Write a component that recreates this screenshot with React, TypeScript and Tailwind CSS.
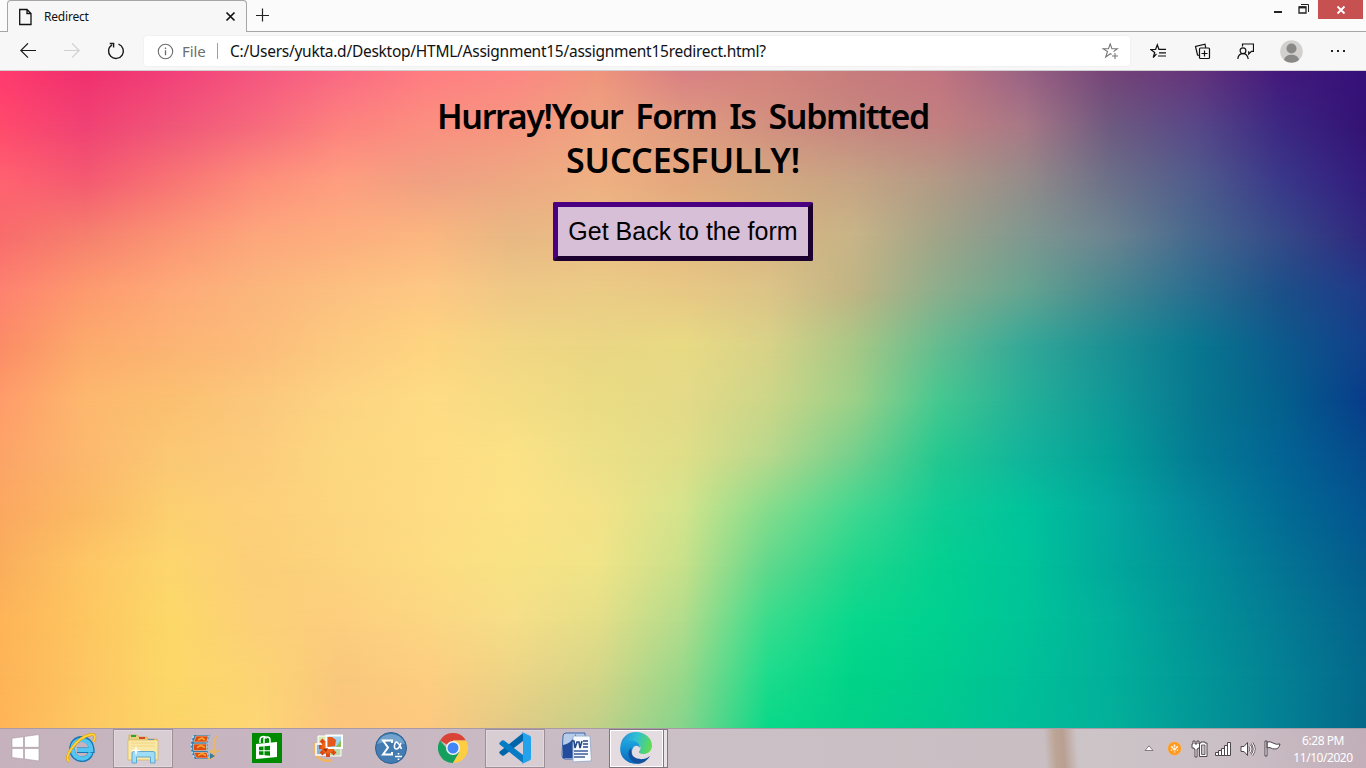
import React from "react";

const COLORS: string[] = [
  "ff3a6e f0306e f2407a f5567f fa6a84 ff7d82 fd8784 f0957c d98084 d4847c c87c7c c27480 9a6284 744478 64347c 43197c 35107a",
  "ff4a6c f04274 f05678 f66a7c fd827e fb8f80 f5967f eea482 e09c80 d29080 c68880 c28080 a87886 6e5a80 584888 3c2882 341274",
  "ff6270 f45a70 f87474 fd8e7a fe9e80 f0a082 eea882 efb082 e4a87e d4a880 c6a484 b29a86 948c8a 6c7088 505c8c 3a388a 331c7e",
  "f86c6c f6806e fb9474 fda67c fdae7e fbb680 e8b884 eabc84 e4b880 d8b480 c8b488 a0a488 809890 6c8490 46688e 364a88 30287e",
  "fe8270 fd9a6e feaa78 fbb67c fcc080 fec884 efc886 ebcc86 e8c884 dcc488 c0b484 8cae8c 66a490 468890 2a6e90 1c5088 203a8a",
  "fb8c66 fcaa6c fcb474 fcbc7a fcca80 fed480 f2d684 ead684 e8da84 d8d288 a8c886 64bc90 34a898 1c9094 087890 0c5a8c 12408a",
  "ff9c6a fdb86e fbc070 fbc87c fdd482 fedc84 f5dc84 eadc84 e4da88 ccd688 9cd088 44c890 24b098 109898 087890 04608c 083c8a",
  "fca468 fcb86e fbc874 fccc7c fcd880 fedc84 fce286 ece088 e0de88 b8d88c 74d08c 24c890 12b49c 04a098 047c94 036494 064a8c",
  "fba860 fbba64 fccf70 fdd07a fdd680 fedc84 fde286 f4e288 d4e48c 84dc8c 40d890 10cc94 00c49c 04a8a0 04889c 026c94 045490",
  "f9ae5c fec664 fdd66e fbce78 fcd47e fddc82 f8e284 f0e488 c8e08a 60d88c 20d68c 04d090 00c49a 02a89c 02909a 047494 045c8c",
  "feb458 fdc660 fcd868 fcd078 fdce7e fcd682 f6de88 e4de88 b2dc8c 38dc8c 08d88c 00d090 00c498 02b09c 029498 047c94 04648c",
  "fdb458 fdc662 fcd868 fcd474 f9c87c fdce80 ecd486 d4d688 98d88a 1cdc8c 00d488 00cc8e 00c098 02b09a 029898 048094 04688c",
  "ffb458 fdc862 fcd468 fdd676 fdc47c fdc880 e0ca86 c0cf88 84d48c 08d888 02d088 02c890 00be98 04b09a 049898 048094 046888",
];

const STEP = 55;
const LAST = COLORS.length - 1;

function Backdrop() {
  return (
    <svg className="absolute top-0 left-0" width="1366" height="660" viewBox="0 0 1366 660" aria-hidden="true">
      <defs>
        {COLORS.map((row, i) => {
          const top = (i - 1) * STEP;
          return (
            <React.Fragment key={i}>
              <linearGradient id={`row${i}`} gradientUnits="userSpaceOnUse" x1="0" y1="0" x2="1366" y2="0">
                {row.split(" ").map((c, j) => (
                  <stop key={j} offset={j / 16} stopColor={`#${c}`} />
                ))}
              </linearGradient>
              {i > 0 && (
                <>
                  <linearGradient id={`fade${i}`} gradientUnits="userSpaceOnUse" x1="0" y1={top} x2="0" y2={top + STEP}>
                    <stop offset="0" stopColor="#fff" stopOpacity="0" />
                    <stop offset="1" stopColor="#fff" stopOpacity="1" />
                  </linearGradient>
                  <mask id={`mask${i}`} maskUnits="userSpaceOnUse" x="0" y={top} width="1366" height={700 - top} style={{ maskType: "alpha" }}>
                    <rect x="0" y={top} width="1366" height={700 - top} fill={`url(#fade${i})`} />
                  </mask>
                </>
              )}
            </React.Fragment>
          );
        })}
      </defs>
      <rect width="1366" height="660" fill="url(#row0)" />
      {COLORS.map((_, i) =>
        i > 0 && i <= LAST ? (
          <rect key={i} x="0" y={(i - 1) * STEP} width="1366" height={700 - (i - 1) * STEP} fill={`url(#row${i})`} mask={`url(#mask${i})`} />
        ) : null
      )}
    </svg>
  );
}

function TitleBar() {
  return (
    <div className="flex h-8 bg-[#fbfbfb]">
      <div className="-mr-px h-8 w-2 shrink-0 border-b border-[#a5a5a5]" />
      <div className="w-60 shrink-0 bg-[#f7f7f7]">
        <div className="flex h-8 items-center rounded-t-[4px] border border-b-0 border-[#a5a5a5]">
          <svg className="ml-[10px]" width="16" height="18" viewBox="0 0 16 18" fill="none" stroke="#111" strokeWidth="1.3">
            <path d="M1.7 1.500h7.300l4 4v11H1.700z M9 1.500v4h4" />
          </svg>
          <span className="ml-[10px] text-[12px] tracking-[-0.2px] text-[#111]">Redirect</span>
          <svg className="mr-[10px] ml-auto" width="11" height="11" viewBox="0 0 11 11" stroke="#111" strokeWidth="1.7">
            <path d="M1.5 1.5l8 8M9.5 1.5l-8 8" />
          </svg>
        </div>
      </div>
      <div className="-ml-px flex flex-1 items-start border-b border-[#a5a5a5]">
        <svg className="mt-[8px] ml-[9px]" width="14" height="14" viewBox="0 0 14 14" stroke="#222" strokeWidth="1.2">
          <path d="M7.500 .5v13M1 7.500h13" />
        </svg>
        <svg className="mt-[3px] ml-auto" width="44" height="12" viewBox="0 0 44 12" fill="none" stroke="#222">
          <path d="M4 9h8" strokeWidth="2" />
          <path d="M29 4h7v6h-7z" strokeWidth="1.3" />
          <path d="M29 4.4h7" strokeWidth="2" />
          <path d="M31 1.5h7.5v7.5" />
        </svg>
        <div className="mr-[3px] ml-[4px] flex h-[19px] w-[45px] items-center justify-center bg-[#c75050]">
          <svg width="10" height="10" viewBox="0 0 10 10" stroke="#fff" strokeWidth="1.8">
            <path d="M1.5 1.5l7 7M8.5 1.5l-7 7" />
          </svg>
        </div>
      </div>
    </div>
  );
}

function Toolbar() {
  return (
    <div className="flex h-[39px] items-center border-b border-[#cfcfcf] bg-[#f7f7f7]">
      <svg className="ml-5" width="16" height="16" viewBox="0 0 16 16" fill="none" stroke="#1a1a1a" strokeWidth="1.2">
        <path d="M16 7.500H.8M8 .3L.8 7.500 8 14.700" />
      </svg>
      <svg className="ml-7" width="16" height="16" viewBox="0 0 16 16" fill="none" stroke="#d0d0d0" strokeWidth="1.2">
        <path d="M0 7.500h15.2M8 .3L15.2 7.500 8 14.700" />
      </svg>
      <svg className="ml-[27px]" width="18" height="18" viewBox="0 0 18 18" fill="none" stroke="#1a1a1a" strokeWidth="1.4">
        <path d="M11.5 2.1A7.4 7.4 0 1 1 5 2.8M2.7 1.5h3.9v3.9" />
      </svg>
      <div className="ml-[19px] flex h-[30px] w-[986px] shrink-0 items-center rounded-[3px] bg-white shadow-[0_0_2px_#e4e4e4]">
        <svg className="ml-[13px]" width="17" height="17" viewBox="0 0 17 17" fill="none" stroke="#6b6b6b" strokeWidth="1.1">
          <circle cx="8.5" cy="8.5" r="7.2" />
          <path d="M8.5 7.3v5M8.5 4.5v1.4" strokeWidth="1.3" />
        </svg>
        <span className="ml-2 w-[25px] text-[15px] tracking-[-0.1px] whitespace-nowrap text-[#6e6e6e]">File</span>
        <span className="mx-[10px] h-4 w-px bg-[#a0a0a0]" />
        <span className="ml-[2px] pt-px text-[15.5px] tracking-[-0.26px] whitespace-nowrap text-[#111]">C:/Users/yukta.d/Desktop/HTML/Assignment15/assignment15redirect.html?</span>
        <svg className="mr-[11px] ml-auto" width="17" height="17" viewBox="0 0 17 17" fill="none" stroke="#777" strokeWidth="1.1">
          <path d="M9.5 11.5l-1.2-.8-4.6 3.3 1.8-5.5L1 5.8h5.500L8.2.9l1.7 4.900h5.400L11.5 8.600M10 13h6M13 10v6" />
        </svg>
      </div>
      <svg className="ml-5" width="17" height="17" viewBox="0 0 17 17" fill="none" stroke="#111" strokeWidth="1.2">
        <path d="M6.5 10.8L3.2 14.5 4.7 9.4.8 6.5h4.8L7.3 1.8l1.6 4.5H16M9 9.8h7M8 13h8" />
      </svg>
      <svg className="ml-[27px]" width="17" height="17" viewBox="0 0 17 17" fill="none" stroke="#111" strokeWidth="1.2">
        <rect x="5.5" y="5" width="10" height="10.5" rx="1" />
        <path d="M10.5 7.5v6M7.5 10.5h6M5.5 12.5l-2-.5L1.5 3.5l9.5-2.3.7 3.6" />
      </svg>
      <svg className="ml-[26px]" width="17" height="17" viewBox="0 0 17 17" fill="none" stroke="#111" strokeWidth="1.2">
        <path d="M5.5 3.5V1h11v7.3h-2l-2.8 2.7V8.3" />
        <circle cx="6" cy="7.8" r="2.9" />
        <path d="M.8 16c.3-3.2 2.2-5.3 5.2-5.3s4.7 2 5.2 5.3" />
      </svg>
      <svg className="ml-[26px]" width="23" height="23" viewBox="0 0 23 23">
        <circle cx="11.5" cy="11.5" r="11.3" fill="#d2d0ce" />
        <circle cx="11.5" cy="8.5" r="5" fill="#8a8886" />
        <path d="M4 20c1-7 14-7 15 0a11.3 11.3 0 0 1-15 0" fill="#8a8886" />
      </svg>
      <svg className="ml-[27px]" width="16" height="4" viewBox="0 0 16 4" fill="#222">
        <path d="M1 1h2v2H1zM7 1h2v2H7zM13 1h2v2h-2z" />
      </svg>
    </div>
  );
}

function WindowsIcon() {
  return (
    <svg width="29" height="28" viewBox="0 0 29 28" fill="#fff" stroke="#a99aa3" strokeWidth=".6">
      <path d="M1 4.3l11.5-1.6v10.6H1zM13.5 2.5L28 .5v12.8H13.5zM1 14.5h11.5V25L1 23.4zM13.5 14.5H28V27l-14.5-2z" />
    </svg>
  );
}

function ExplorerEIcon() {
  return (
    <svg width="32" height="32" viewBox="0 0 32 32" fill="none">
      <path d="M25.8 20.5C23.5 30 8 30 7 17.5 6.500 4 26 2.500 26.800 18.200H12" stroke="#1677b4" strokeWidth="5.600" />
      <path d="M25.500 20.500C23 29 8.500 29 7.500 17.500 7.300 5 25.500 4 26.200 18H12" stroke="#52c5f2" strokeWidth="4.200" />
      <path d="M4.500 29.500C-3 26 12 5 26 2.500c5-.7 4.500 3 2.500 7" stroke="#d99800" strokeWidth="2.800" />
      <path d="M4.500 29.500C-3 26 12 5 26 2.500c5-.7 4.500 3 2.500 7" stroke="#ffd23c" strokeWidth="1.800" />
    </svg>
  );
}

function FolderIcon() {
  return (
    <svg width="32" height="32" viewBox="0 0 32 32">
      <path d="M2 3h8l2 2h8l1 2h9v19H2z" fill="#e9cf7c" stroke="#c9a650" strokeWidth=".7" />
      <path d="M4 3h5v2H4z" fill="#2aa33c" />
      <path d="M12 5h6v2h-6z" fill="#d64a2a" />
      <path d="M21 7h6v2h-6z" fill="#3b82d8" />
      <path d="M1 8h30v20H1z" fill="#fae8a6" stroke="#d3b562" strokeWidth=".7" />
      <path d="M4 11h24M4 14h24" stroke="#efd684" />
      <path d="M5 31V21q0-1.500 2-1.500h19q2 0 2 1.500v10h-4.500v-6h-14v6z" fill="#9fdcf5" stroke="#4a9dc9" strokeWidth=".8" />
      <path d="M9 13l1 4.500 4.500 1-4.500 1-1 4.500-1-4.500-4.500-1 4.500-1z" fill="#fff" />
    </svg>
  );
}

function MovieIcon() {
  return (
    <svg width="32" height="28" viewBox="0 0 32 28">
      <path d="M5 1h16q-5 12 0 24H6Q-2 13 5 1z" fill="#317fae" />
      <path d="M7 2h12.500l-1.800 6H4.800zM4.500 10H17.500v6.500H4.500zM5 18.500h13l1.500 5.500H7.500z" fill="#dd4b12" stroke="#efc2a0" strokeWidth=".7" />
      <path d="M9 6l4-2 3 2M8 13.500l4-2 4 2M9 21.500l4-2 4 2" stroke="#ffa428" strokeWidth="1.700" fill="none" />
      <path d="M4.500 2Q-.5 13 5.500 24" stroke="#b8e3f5" strokeWidth="1.600" strokeDasharray="2 2" fill="none" />
      <path d="M20 1.500q-3.500 11 0 23" stroke="#96cbe5" strokeWidth="2" strokeDasharray="2 1.500" fill="none" />
      <path d="M19 25c9 0 6-10 3-8-2 2 5 2 9-1M28 2c-6 6 0 13-4 20" stroke="#eab768" strokeWidth="1.900" fill="none" />
      <path d="M21 19l5 3-5 3z" fill="#397a9d" />
    </svg>
  );
}

function StoreIcon() {
  return (
    <svg width="30" height="30" viewBox="0 0 30 30">
      <path d="M0 0h30v30H0z" fill="#008a00" />
      <path d="M8 10V7q0-3.500 4-3.500 2 0 2.500 2M12 10V6q0-2 3-2t3 3v3" fill="none" stroke="#fff" strokeWidth="1.500" />
      <path d="M4 11l21-2v15l-21 2z" fill="#fff" />
      <path d="M7 13.800l4.500-.4v3.800H7zM12.500 13.300l5.500-.5v4.400h-5.500zM7 18.200h4.500v3.900l-4.500-.4zM12.500 18.200h5.500v4.500l-5.500-.5z" fill="#008a00" />
    </svg>
  );
}

function PhotosIcon() {
  return (
    <svg width="30" height="28" viewBox="0 0 30 28">
      <path d="M1 9q-3 17 14 18l3-1" fill="none" stroke="#f5b35d" strokeWidth="2.500" />
      <path d="M4 2h10v9H4z" fill="#d9e9b5" stroke="#fff" />
      <path d="M2 10h12v11H2z" fill="#8fb5d3" stroke="#fff" strokeWidth="1.500" />
      <path d="M14 13h13v9H14z" fill="#b9d9ae" stroke="#fff" />
      <g stroke="#df4911" strokeWidth="4">
        <path d="M14 3v20M5 13h18M7 6l14 14M21 6L7 20" />
      </g>
      <circle cx="14" cy="13" r="6.500" fill="#ee6517" />
      <path d="M12.500 1.500h15.500V14H12.500z" fill="#a1d2ed" stroke="#fff" strokeWidth="2" />
      <path d="M13.500 3h4.500l4 3-1 6-7.500 1z" fill="#e4591a" />
      <path d="M27 6v7h-5z" fill="#8abf56" />
      <path d="M9 15l5-1-2 4" fill="#a62b0b" />
    </svg>
  );
}

function MathIcon() {
  return (
    <svg width="32" height="32" viewBox="0 0 32 32">
      <circle cx="16" cy="16" r="15.500" fill="#427cb2" stroke="#2c6293" />
      <path d="M2 12q4-10 14-10t14 10q-15-5-28 0z" fill="#70a2cc" />
      <path d="M17 11V8.500H8l5 7-5 7h9V20" fill="none" stroke="#fff" strokeWidth="2" />
      <path d="M26 11q-2 6-4.500 6t-2-3.500 2-3.500Q24 11 26.500 17M20 24.500h7M23.500 21v1.500M23.500 26.500v1.500" fill="none" stroke="#fff" strokeWidth="1.600" />
    </svg>
  );
}

function ChromeIcon() {
  return (
    <svg width="30" height="30" viewBox="0 0 30 30">
      <path d="M15 15L2 7.500A15 15 0 0 1 28 7.500H15z" fill="#da4437" />
      <path d="M15 15h-6.500L2 7.500A15 15 0 0 0 15 30l6.500-11z" fill="#16a05d" />
      <path d="M15 7.500h13A15 15 0 0 1 15 30l6.500-11.250z" fill="#ffcd41" />
      <circle cx="15" cy="15" r="7" fill="#f4f4f4" />
      <circle cx="15" cy="15" r="5.500" fill="#4285f4" />
    </svg>
  );
}

function CodeIcon() {
  return (
    <svg width="32" height="32" viewBox="0 0 32 32">
      <path d="M24 1v8L5 23.500q-1 .7-2 0L.7 21.500q-.9-1 0-1.900z" fill="#0065a9" />
      <path d="M24 31v-8L5 8.500q-1-.7-2 0L.7 10.500q-.9 1 0 1.900z" fill="#087bc5" />
      <path d="M24 .5l7 3.300q1 .5 1 1.600v21.200q0 1.100-1 1.600l-7 3.300q-1 .3-1.700-.5Q24 32 24 28V4q0-3-1.700-3 .7-.8 1.700-.5z" fill="#24a3ec" />
    </svg>
  );
}

function WordIcon() {
  return (
    <svg width="32" height="32" viewBox="0 0 32 32">
      <path d="M2 4q0-3 3-3h19v26H4q-3 0-3-4z" fill="#b7cce9" stroke="#3f66a9" />
      <path d="M2 13q8-1 13-11v24H2z" fill="#234c9c" />
      <path d="M12 4h17l1.500 25-18.500 1z" fill="#f7faff" stroke="#9eb2ce" />
      <path d="M11 9h2l1 7 2-6h2l1 6 2-7M22 9h5M22 12h5M22 15h5" fill="none" stroke="#254889" strokeWidth="1.600" />
      <path d="M13 19h14M13 22h14M13 25h11" stroke="#3b5e99" strokeWidth="1.400" />
    </svg>
  );
}

function EdgeIcon() {
  return (
    <svg width="32" height="32" viewBox="0 0 32 32">
      <defs>
        <linearGradient id="edgeTop" x1="0" y1=".4" x2="1" y2=".6">
          <stop offset="0" stopColor="#2591d8" />
          <stop offset=".45" stopColor="#2ebfd6" />
          <stop offset="1" stopColor="#63dc4b" />
        </linearGradient>
        <linearGradient id="edgeSide" x1="0" y1="0" x2="0" y2="1">
          <stop offset="0" stopColor="#1da6df" />
          <stop offset="1" stopColor="#0867be" />
        </linearGradient>
      </defs>
      <path d="M.3 15C1 6 7 0 16 0c9.500 0 16 6.500 16 13.500 0 6-4.500 8.500-9 8.500-3 0-4.500-1-4-2.500 3-3 1.500-7.500-3.500-9C10 8.500 3 10 .3 15z" fill="url(#edgeTop)" />
      <path d="M.2 16C1 10 6.500 7.500 12 8.500c6 1 8 4 8 7.500-2-3-6-3-7.500 1-2 6 2 12.500 8 14.300C9 34-.7 26 .2 16z" fill="url(#edgeSide)" />
      <path d="M11.500 16c-2.500 7 3.500 12 12 11 3-.4 5-2 6.500-3C26 31 19 33 14.500 30.500 7.500 27 6.500 19 11.500 16z" fill="#11519e" />
    </svg>
  );
}

const APPS = [
  { id: "ie", icon: <ExplorerEIcon />, open: false },
  { id: "files", icon: <FolderIcon />, open: true },
  { id: "movie", icon: <MovieIcon />, open: false },
  { id: "store", icon: <StoreIcon />, open: false },
  { id: "photos", icon: <PhotosIcon />, open: false },
  { id: "math", icon: <MathIcon />, open: false },
  { id: "chrome", icon: <ChromeIcon />, open: false },
  { id: "code", icon: <CodeIcon />, open: true },
  { id: "word", icon: <WordIcon />, open: false },
];

function Tray() {
  return (
    <div className="ml-auto flex items-center">
      <svg width="10" height="7" viewBox="0 0 10 7" fill="#fff" stroke="#6e626b" strokeWidth=".8">
        <path d="M5 .8L9 5.500H1z" />
      </svg>
      <svg className="ml-[13px]" width="15" height="15" viewBox="0 0 15 15">
        <circle cx="7.500" cy="7.500" r="6.900" fill="#ff9a1f" stroke="#e9c49a" strokeWidth=".8" />
        <path d="M7.500 3.500v8M4 5.500l7 4M11 5.500l-7 4" stroke="#fff2df" strokeWidth="1.500" strokeDasharray="2.500 1" />
      </svg>
      <svg className="ml-[9px]" width="17" height="18" viewBox="0 0 17 18">
        <path d="M2 1h2v3h2V1h2v3h1v4H7v1H6v8H4V9H3V8H1V4h1z" fill="#fff" stroke="#4e464c" />
        <path d="M10 2h4v1h2v13.500H8.500V3H10z" fill="#fff" stroke="#4e464c" />
        <path d="M10.500 5h3.500v9.500h-3.500z" fill="#c8bcc3" stroke="#4e464c" strokeWidth=".8" />
      </svg>
      <svg className="ml-[7px]" width="17" height="14" viewBox="0 0 17 14" fill="#fff" stroke="#4e464c">
        <path d="M.5 10.500h3v3h-3zM3.500 8.500h3v5h-3zM6.500 6.500h3v7h-3zM9.500 3.500h3v10h-3zM12.500 .5h3v13h-3z" />
      </svg>
      <svg className="ml-[8px]" width="16" height="16" viewBox="0 0 16 16" fill="none">
        <path d="M9.500 4.500q3 3.500 0 7M12 2q4.500 6 0 12" stroke="#4e464c" strokeWidth="2.600" />
        <path d="M9.500 4.500q3 3.500 0 7M12 2q4.500 6 0 12" stroke="#fff" strokeWidth="1.200" />
        <path d="M1 5.500h3l3.500-4v13l-3.500-4H1z" fill="#fff" stroke="#4e464c" />
      </svg>
      <svg className="ml-[8px]" width="17" height="17" viewBox="0 0 17 17">
        <path d="M1 1h2v15H1zM3 2q3-1 6 1 3 2 7 1-1 5-5 5-3 0-4-1-2-1-4 0z" fill="#fff" stroke="#4e464c" />
      </svg>
      <div className="mr-[12px] ml-[11px] w-[62px] text-center text-[12px] leading-[17px] tracking-[-0.45px] whitespace-nowrap text-white">
        <div>6:28 PM</div>
        <div>11/10/2020</div>
      </div>
    </div>
  );
}

function Taskbar() {
  return (
    <div className="flex h-10 items-start border-t border-[#a99aa5] bg-[linear-gradient(86deg,#c5b2bd_0%,#c8b9c3_35%,#cbc0c5_50%,#c9bfc3_76.4%,#bca595_77.2%,#b99f92_77.8%,#ccc3c6_78.8%,#ccc4c7_80%,#cbbfc6_90%,#c1aeb8_100%)]">
      <div className="flex h-[38px] w-[50px] shrink-0 items-center justify-center">
        <WindowsIcon />
      </div>
      <div className="ml-px flex gap-[2px]">
        {APPS.map((app) => (
          <div
            key={app.id}
            className={
              app.open
                ? "flex h-[39px] w-[60px] items-center justify-center border border-[#9d8f98] bg-[#d7cdd2] pb-px shadow-[inset_0_0_0_1px_#e2d9de]"
                : "flex h-[39px] w-[60px] items-center justify-center pb-px"
            }
          >
            {app.icon}
          </div>
        ))}
        <div className="flex h-[39px]">
          <div className="flex w-[55px] items-center justify-center border border-[#81767d] bg-[#e4dce0] pr-px pb-px shadow-[inset_0_0_0_1px_#fff]">
            <EdgeIcon />
          </div>
          <div className="w-[4px] border border-l-0 border-[#81767d] bg-[#e9e2e6]" />
        </div>
      </div>
      <div className="ml-auto flex h-[39px] items-center">
        <Tray />
      </div>
    </div>
  );
}

export default function App() {
  return (
    <div className="flex h-[768px] w-[1366px] flex-col overflow-hidden font-['Noto_Sans','Open_Sans',sans-serif]">
      <TitleBar />
      <Toolbar />
      <main className="relative flex-1 overflow-hidden">
        <Backdrop />
        <div className="relative flex flex-col items-center pt-[23px]">
          <h1 className="text-center font-['Comic_Sans_MS','Noto_Sans',sans-serif] text-[34px] leading-[44px] font-semibold text-black">
            <span className="tracking-[-1.35px] [word-spacing:5.2px]">Hurray!Your Form Is Submitted</span>
            <br />
            <span>SUCCESFULLY!</span>
          </h1>
          <button className="mt-5 h-[59px] w-[260px] rounded-[2px] border-[5px] border-t-[#4b0082] border-r-[#1b0030] border-b-[#1b0030] border-l-[#4b0082] bg-[#d8bfd8] font-['Liberation_Sans',Arial,sans-serif] text-[25px] whitespace-nowrap text-black">
            Get Back to the form
          </button>
        </div>
      </main>
      <Taskbar />
    </div>
  );
}
